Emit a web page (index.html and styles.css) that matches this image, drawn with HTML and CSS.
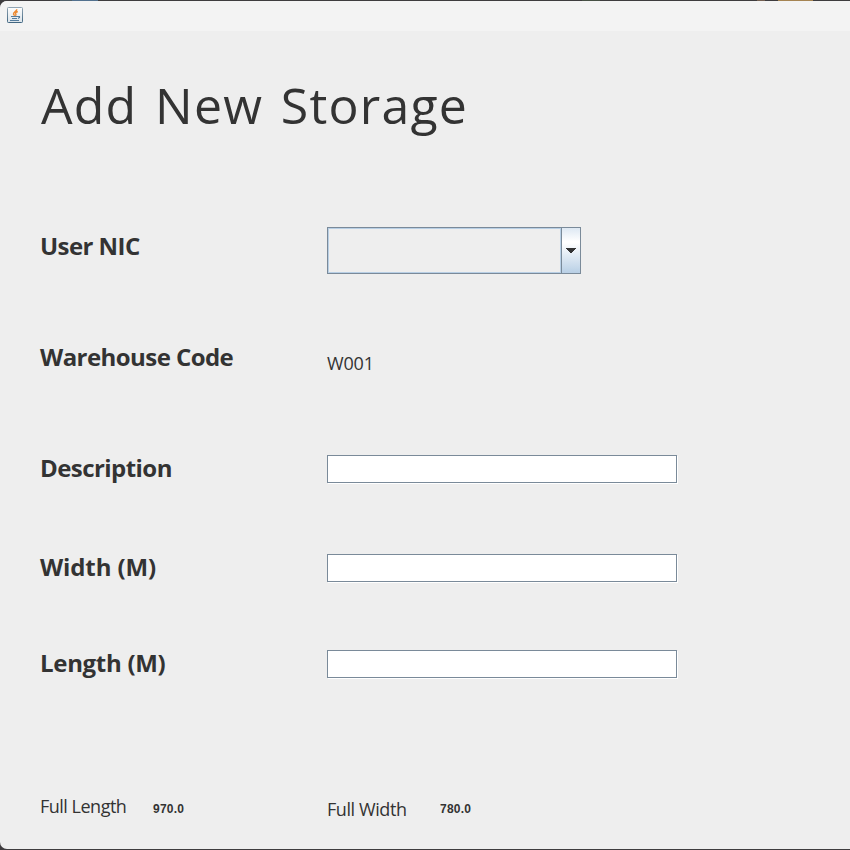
FILE: index.html
```
<!DOCTYPE html>
<html lang="en">
<head>
<meta charset="utf-8">
<title>Add New Storage</title>
<link rel="stylesheet" href="styles.css">
</head>
<body>
<div class="desktop">
<div class="strip"><i class="s1"></i><i class="s2"></i><i class="s3"></i><i class="s4"></i><i class="s5"></i></div>
<div class="window">
  <header class="titlebar">
    <svg class="java" width="16" height="16" viewBox="0 0 16 16">
      <defs><linearGradient id="jb" x1="0" y1="0" x2="0" y2="1"><stop offset="0" stop-color="#90a4b3"/><stop offset="1" stop-color="#416681"/></linearGradient>
      <linearGradient id="jf" x1="0" y1="0" x2="0" y2="1"><stop offset="0" stop-color="#fdfdfd"/><stop offset="1" stop-color="#dce4ea"/></linearGradient></defs>
      <rect x=".5" y=".5" width="15" height="15" rx=".8" fill="url(#jf)" stroke="url(#jb)"/>
      <path d="M9.800 2.200C10 4.300 6 5 6.500 7.200L7.700 8.700M10.800 4.500C8.500 5.300 8 6.500 8.900 7.300Q9.200 8 8.300 8.700" fill="none" stroke="#ed8a32" stroke-width="1.400"/>
      <path d="M4 9.500H11M5 11.500H10M3 13.500H12M11 9.500H12.500V10.500L11 11.500" fill="none" stroke="#557c9d" stroke-width="1.100"/>
    </svg>
  </header>
  <main class="content">
    <h1>Add New Storage</h1>
    <form>
      <div class="row nic"><label>User NIC</label>
        <div class="combo"><div class="choice"></div><div class="arrow"><svg width="10" height="5" viewBox="0 0 10 5" shape-rendering="crispEdges"><path d="M0 0H10V1H9V2H8V3H7V4H6V5H4V4H3V3H2V2H1V1H0Z" fill="#333"/></svg></div></div>
      </div>
      <div class="row code"><label>Warehouse Code</label><span class="value">W001</span></div>
      <div class="row desc"><label>Description</label><input class="field" type="text"></div>
      <div class="row width"><label>Width (M)</label><input class="field" type="text"></div>
      <div class="row length"><label>Length (M)</label><input class="field" type="text"></div>
    </form>
    <footer class="totals">
      <span class="caption">Full Length</span><b>970.0</b>
      <span class="caption low">Full Width</span><b>780.0</b>
    </footer>
  </main>
</div>
</div>
</body>
</html>
```
FILE: styles.css
```
* { box-sizing: border-box; }
body { margin: 0; color: #333; font-family: "Open Sans", "Noto Sans", sans-serif; }
.desktop { width: 850px; height: 850px; background: #3e3c3e; overflow: hidden; }
.strip { height: 1px; display: flex; }
.strip i { height: 1px; }
.s1 { width: 12px; margin-left: 60px; background: #50606a; }
.s2 { width: 26px; background: #52718f; }
.s3 { width: 18px; margin-left: 484px; background: #465044; }
.s4 { width: 8px; margin-left: 157px; background: #746052; }
.s5 { width: 35px; margin-left: 13px; background: #a58452; }
.window { height: 848px; background: #eee; border-radius: 7px 0 0 7px; overflow: hidden; }
.titlebar { height: 30px; padding: 6px 7px; background: #f3f3f3; }
.java { display: block; }
.content { padding: 41px 40px 0; }
h1 { margin: 0; padding-left: 1px; height: 155px; font-size: 50px; font-weight: 400; line-height: 66px; letter-spacing: 1.2px; word-spacing: 3.5px; white-space: nowrap; }
.row { display: grid; grid-template-columns: 287px 1fr; align-items: start; }
.nic { height: 114px; }
.code { height: 111px; }
.desc { height: 99px; }
.width { height: 96px; }
.length { height: 147px; }
label { font-size: 24px; line-height: 32px; font-weight: 700; letter-spacing: -.56px; white-space: nowrap; }
.nic label { margin-top: 3px; }
.width label { letter-spacing: -.12px; }
.length label { letter-spacing: -.3px; }
.value, .caption { font-size: 18px; line-height: 24px; white-space: nowrap; }
.value { margin-top: 10px; letter-spacing: -.15px; }
.caption { letter-spacing: -.5px; }
.combo { display: flex; width: 254px; height: 47px; border: 1px solid #7a8a99; }
.choice { flex: 1; border: 1px solid #b8cfe5; }
.arrow { width: 19px; display: flex; align-items: center; justify-content: center; border-left: 1px solid #7a8a99; background: linear-gradient(#dde8f3, #fff 30%, #fff 33%, #b8cfe5); }
.field { width: 350px; height: 28px; margin: 3px 0 0; padding: 0 4px; border: 1px solid #7a8a99; border-radius: 0; background: #fff; box-shadow: 1px 1px 0 #fff; outline: none; }
.totals { display: grid; grid-template-columns: 113px 174px 113px 1fr; align-items: start; }
.totals b { margin-top: 7px; font: bold 12px/16px "Liberation Sans", Arial, sans-serif; letter-spacing: .25px; }
.low { margin-top: 3px; letter-spacing: -.42px; }
```
